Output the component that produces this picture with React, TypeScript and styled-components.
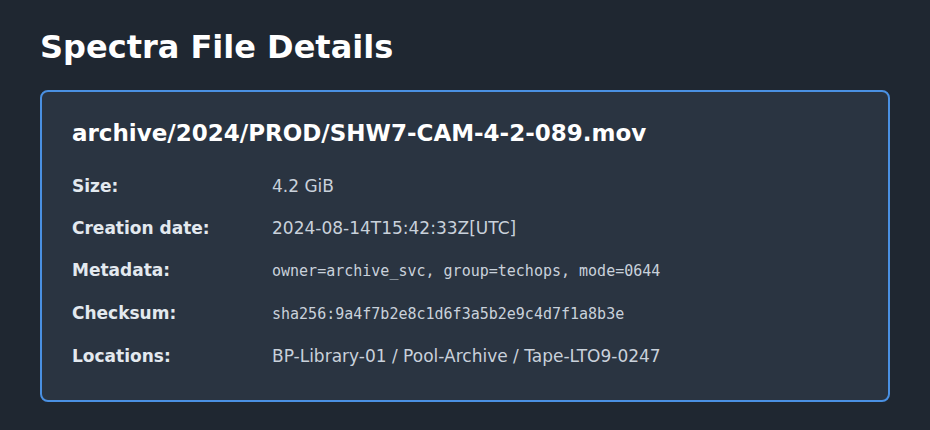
import React from "react";
import styled, { createGlobalStyle } from "styled-components";

const Global = createGlobalStyle`
  html, body { margin: 0; padding: 0; background: #1f2731; }
  body { font-family: "DejaVu Sans", sans-serif; color: #e8edf2; }
`;

const Page = styled.main`
  padding: 29px 40px 30px;
  display: flex;
  flex-direction: column;
  gap: 24px;
`;

const Heading = styled.h1`
  margin: 0;
  font-size: 32px;
  font-weight: bold;
  line-height: 37px;
  color: #ffffff;
`;

const Card = styled.section`
  background: #2a3441;
  border: 2px solid #4a90e2;
  border-radius: 8px;
  padding: 28px 30px 34px;
  display: flex;
  flex-direction: column;
  gap: 29px;
`;

const FileName = styled.h2`
  margin: 0;
  font-size: 23px;
  line-height: 27px;
  font-weight: bold;
  color: #ffffff;
`;

const Grid = styled.dl`
  margin: 0;
  display: grid;
  grid-template-columns: 200px 1fr;
  row-gap: 22px;
  align-items: baseline;
`;

const Label = styled.dt`
  font-size: 17px;
  line-height: 20px;
  font-weight: bold;
  color: #e3e9ef;
`;

const Value = styled.dd<{ $mono?: boolean }>`
  margin: 0;
  font-size: ${(p) => (p.$mono ? "15px" : "17px")};
  line-height: 20px;
  font-family: ${(p) => (p.$mono ? '"DejaVu Sans Mono", monospace' : '"DejaVu Sans", sans-serif')};
  color: #c9d1db;
`;

const rows: { label: string; value: string; mono?: boolean }[] = [
  { label: "Size:", value: "4.2 GiB" },
  { label: "Creation date:", value: "2024-08-14T15:42:33Z[UTC]" },
  { label: "Metadata:", value: "owner=archive_svc, group=techops, mode=0644", mono: true },
  { label: "Checksum:", value: "sha256:9a4f7b2e8c1d6f3a5b2e9c4d7f1a8b3e", mono: true },
  { label: "Locations:", value: "BP-Library-01 / Pool-Archive / Tape-LTO9-0247" },
];

export default function App() {
  return (
    <>
      <Global />
      <Page>
        <Heading>Spectra File Details</Heading>
        <Card>
          <FileName>archive/2024/PROD/SHW7-CAM-4-2-089.mov</FileName>
          <Grid>
            {rows.map((r) => (
              <React.Fragment key={r.label}>
                <Label>{r.label}</Label>
                <Value $mono={r.mono}>{r.value}</Value>
              </React.Fragment>
            ))}
          </Grid>
        </Card>
      </Page>
    </>
  );
}
